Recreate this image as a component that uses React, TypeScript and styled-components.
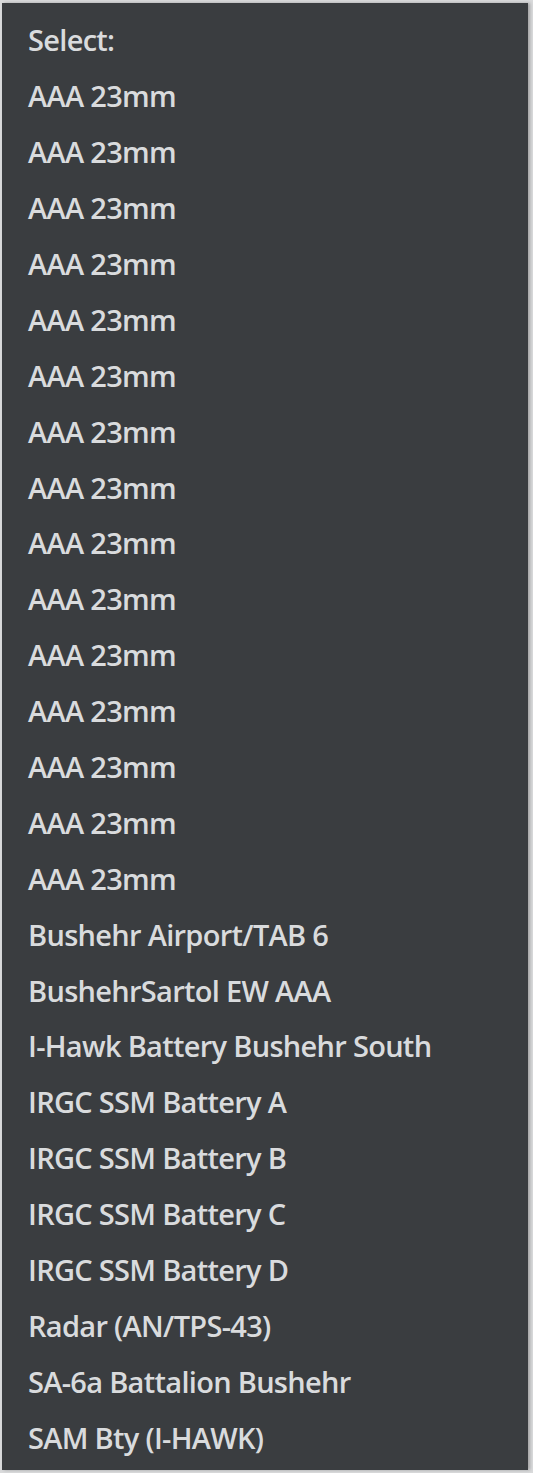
import React from "react";
import styled, { createGlobalStyle } from "styled-components";

const GlobalStyle = createGlobalStyle`
  html, body {
    margin: 0;
    padding: 0;
    background: #d9dadb;
  }
  #root {
    width: 533px;
    height: 1473px;
    box-sizing: border-box;
    padding: 3px 5px 3px 2px;
  }
`;

const Menu = styled.ul`
  list-style: none;
  margin: 0;
  padding: 9px 0 5px 0;
  height: 100%;
  box-sizing: border-box;
  background: #3a3d40;
  box-shadow: 2px 0 3px rgba(0, 0, 0, 0.25);
  display: flex;
  flex-direction: column;
`;

const Item = styled.li`
  height: 55.9px;
  display: flex;
  align-items: center;
  padding-left: 26px;
  font-family: "Open Sans", "Noto Sans", sans-serif;
  font-size: 29px;
  font-weight: 600;
  letter-spacing: -0.7px;
  color: #d9dbdd;
  white-space: nowrap;
`;

const items = [
  "Select:",
  ...Array(15).fill("AAA 23mm"),
  "Bushehr Airport/TAB 6",
  "BushehrSartol EW AAA",
  "I-Hawk Battery Bushehr South",
  "IRGC SSM Battery A",
  "IRGC SSM Battery B",
  "IRGC SSM Battery C",
  "IRGC SSM Battery D",
  "Radar (AN/TPS-43)",
  "SA-6a Battalion Bushehr",
  "SAM Bty (I-HAWK)",
];

export default function App() {
  return (
    <>
      <GlobalStyle />
      <Menu>
        {items.map((t, i) => (
          <Item key={i}>{t}</Item>
        ))}
      </Menu>
    </>
  );
}
